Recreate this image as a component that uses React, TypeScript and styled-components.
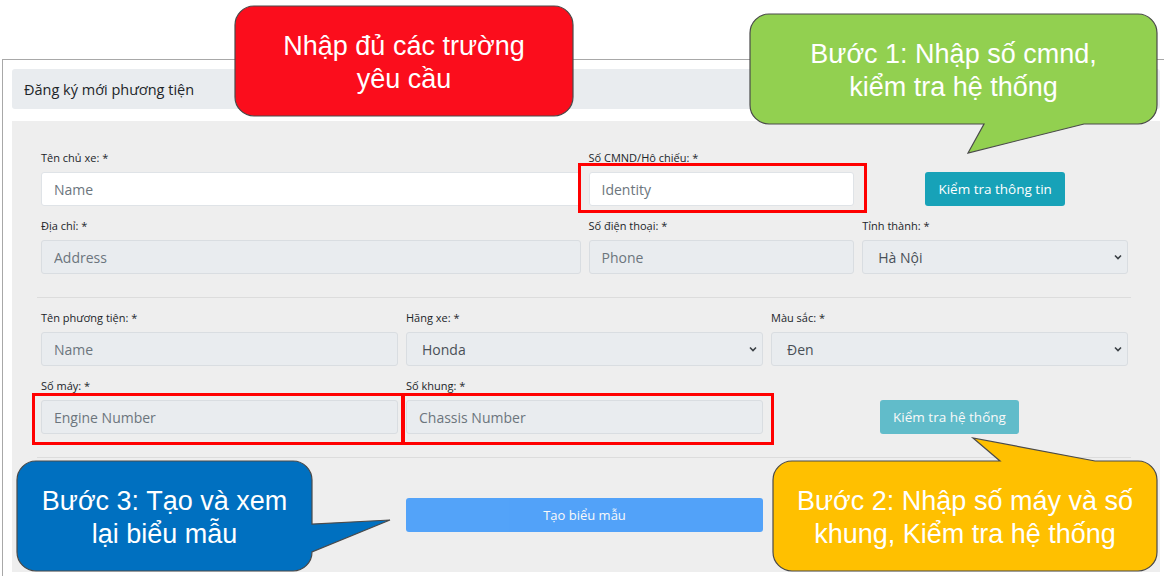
import React from "react";
import styled, { createGlobalStyle } from "styled-components";

const GlobalStyle = createGlobalStyle`
  html, body { margin: 0; padding: 0; background: #ffffff; overflow: hidden; }
  body { font-family: "Open Sans", "Noto Sans", sans-serif; }
  * { box-sizing: border-box; }
`;

const Page = styled.div`
  position: relative;
  width: 1164px;
  height: 576px;
  overflow: hidden;
  padding: 59px 0 0 2px;
`;

const Frame = styled.div`
  width: 1180px;
  height: 620px;
  border-top: 1px solid #a8a8a8;
  border-left: 1px solid #a8a8a8;
  padding: 9px 0 0 9px;
`;

const Header = styled.div`
  width: 1148px;
  height: 40px;
  background: #e9ecef;
  border-radius: 3px;
  display: flex;
  align-items: center;
  padding-left: 12px;
  font-size: 14.5px;
  color: #212529;
`;

const Body = styled.div`
  margin-top: 12px;
  width: 1148px;
  background: #eeeeee;
  padding: 30px 32px 40px 29px;
`;

const Grid = styled.div`
  display: grid;
  grid-template-columns: repeat(12, minmax(0, 1fr));
  column-gap: 8px;
  row-gap: 13px;
`;

const Field = styled.div<{ $span: number }>`
  grid-column: span ${(p) => p.$span};
  display: flex;
  flex-direction: column;
  gap: 7px;
`;

const Cell = styled.div<{ $span: number }>`
  grid-column: span ${(p) => p.$span};
  display: flex;
  align-items: flex-end;
  justify-content: center;
`;

const Label = styled.label`
  font-size: 11px;
  line-height: 14px;
  color: #212529;
  white-space: nowrap;
`;

const Input = styled.input<{ $white?: boolean }>`
  height: 34px;
  width: 100%;
  border: 1px solid ${(p) => (p.$white ? "#dfe3e7" : "#d9dde1")};
  border-radius: 3px;
  background: ${(p) => (p.$white ? "#ffffff" : "#e9ecef")};
  padding: 0 12px;
  font-family: "Open Sans", "Noto Sans", sans-serif;
  font-size: 14px;
  color: #495057;
  outline: none;
  &::placeholder {
    color: #6c757d;
    opacity: 1;
  }
`;

const SelectBox = styled.div`
  height: 34px;
  width: 100%;
  border: 1px solid #d9dde1;
  border-radius: 3px;
  background: #e9ecef;
  padding: 0 5px 0 15px;
  display: flex;
  align-items: center;
  justify-content: space-between;
  font-size: 14px;
  color: #495057;
`;

const Chevron = () => (
  <svg width="8" height="6" viewBox="0 0 8 6">
    <path d="M1 1.5 L4 4.5 L7 1.5" fill="none" stroke="#3a3f44" strokeWidth="1.6" />
  </svg>
);

const Button = styled.button<{ $muted?: boolean; $full?: boolean; $primary?: boolean }>`
  height: 34px;
  padding: 0 13px;
  width: ${(p) => (p.$full ? "100%" : "auto")};
  border: none;
  border-radius: 3px;
  background: ${(p) => (p.$primary ? "#007bff" : "#17a2b8")};
  opacity: ${(p) => (p.$muted ? 0.65 : 1)};
  color: #ffffff;
  font-family: "Open Sans", "Noto Sans", sans-serif;
  font-size: ${(p) => (p.$primary ? "13px" : "13.5px")};
  white-space: nowrap;
`;

const Divider = styled.hr<{ $after: number }>`
  border: 0;
  border-top: 1px solid #dcdcdc;
  margin: 23px -3px ${(p) => p.$after}px -4px;
  height: 0;
`;

const Highlight = styled.div<{ $x: number; $y: number; $w: number; $h: number }>`
  position: absolute;
  left: ${(p) => p.$x}px;
  top: ${(p) => p.$y}px;
  width: ${(p) => p.$w}px;
  height: ${(p) => p.$h}px;
  border: 3px solid #ff0000;
`;

const Bubble = styled.div<{ $x: number; $y: number; $w: number; $h: number }>`
  position: absolute;
  left: ${(p) => p.$x}px;
  top: ${(p) => p.$y}px;
  width: ${(p) => p.$w}px;
  height: ${(p) => p.$h}px;
  display: flex;
  align-items: center;
  justify-content: center;
  padding-top: 3px;
`;

const BubbleShape = styled.svg`
  position: absolute;
  left: 0;
  top: 0;
  overflow: visible;
`;

const BubbleText = styled.div`
  position: relative;
  font-family: "Liberation Sans", Arial, sans-serif;
  font-size: 27px;
  line-height: 33px;
  color: #ffffff;
  text-align: center;
  white-space: nowrap;
`;

type Tail = { edge: "top" | "right" | "bottom"; a: number; b: number; tip: [number, number] };

function bubblePath(w: number, h: number, r: number, tail?: Tail) {
  let d = `M ${r} 0`;
  if (tail?.edge === "top") d += ` H ${tail.a} L ${tail.tip[0]} ${tail.tip[1]} L ${tail.b} 0`;
  d += ` H ${w - r} A ${r} ${r} 0 0 1 ${w} ${r}`;
  if (tail?.edge === "right") d += ` V ${tail.a} L ${tail.tip[0]} ${tail.tip[1]} L ${w} ${tail.b}`;
  d += ` V ${h - r} A ${r} ${r} 0 0 1 ${w - r} ${h}`;
  if (tail?.edge === "bottom") d += ` H ${tail.b} L ${tail.tip[0]} ${tail.tip[1]} L ${tail.a} ${h}`;
  d += ` H ${r} A ${r} ${r} 0 0 1 0 ${h - r} V ${r} A ${r} ${r} 0 0 1 ${r} 0 Z`;
  return d;
}

type CalloutProps = {
  x: number;
  y: number;
  w: number;
  h: number;
  fill: string;
  tail?: Tail;
  lines: string[];
};

const Callout = ({ x, y, w, h, fill, tail, lines }: CalloutProps) => (
  <Bubble $x={x} $y={y} $w={w} $h={h}>
    <BubbleShape width={w} height={h}>
      <path d={bubblePath(w, h, 19, tail)} fill={fill} stroke="#4a4a4a" strokeWidth="1.2" />
    </BubbleShape>
    <BubbleText>
      {lines.map((l, i) => (
        <div key={i}>{l}</div>
      ))}
    </BubbleText>
  </Bubble>
);

const Select = ({ value }: { value: string }) => (
  <SelectBox>
    <span>{value}</span>
    <Chevron />
  </SelectBox>
);

export default function App() {
  return (
    <>
      <GlobalStyle />
      <Page>
        <Frame>
          <Header>Đăng ký mới phương tiện</Header>
          <Body>
            <Grid>
              <Field $span={6}>
                <Label>Tên chủ xe: *</Label>
                <Input $white placeholder="Name" readOnly />
              </Field>
              <Field $span={3}>
                <Label>Số CMND/Hộ chiếu: *</Label>
                <Input $white placeholder="Identity" readOnly />
              </Field>
              <Cell $span={3}>
                <Button>Kiểm tra thông tin</Button>
              </Cell>
              <Field $span={6}>
                <Label>Địa chỉ: *</Label>
                <Input placeholder="Address" disabled />
              </Field>
              <Field $span={3}>
                <Label>Số điện thoại: *</Label>
                <Input placeholder="Phone" disabled />
              </Field>
              <Field $span={3}>
                <Label>Tỉnh thành: *</Label>
                <Select value="Hà Nội" />
              </Field>
            </Grid>
            <Divider $after={13} />
            <Grid>
              <Field $span={4}>
                <Label>Tên phương tiện: *</Label>
                <Input placeholder="Name" disabled />
              </Field>
              <Field $span={4}>
                <Label>Hãng xe: *</Label>
                <Select value="Honda" />
              </Field>
              <Field $span={4}>
                <Label>Màu sắc: *</Label>
                <Select value="Đen" />
              </Field>
              <Field $span={4}>
                <Label>Số máy: *</Label>
                <Input placeholder="Engine Number" disabled />
              </Field>
              <Field $span={4}>
                <Label>Số khung: *</Label>
                <Input placeholder="Chassis Number" disabled />
              </Field>
              <Cell $span={4}>
                <Button $muted>Kiểm tra hệ thống</Button>
              </Cell>
            </Grid>
            <Divider $after={40} />
            <Grid>
              <Cell $span={4} />
              <Cell $span={4}>
                <Button $primary $muted $full>
                  Tạo biểu mẫu
                </Button>
              </Cell>
            </Grid>
          </Body>
        </Frame>

        <Highlight $x={578} $y={163} $w={289} $h={50} />
        <Highlight $x={32} $y={393} $w={372} $h={52} />
        <Highlight $x={402} $y={393} $w={372} $h={52} />

        <Callout x={235} y={6} w={338} h={110} fill="#fb0d1c" lines={["Nhập đủ các trường", "yêu cầu"]} />
        <Callout
          x={750}
          y={14}
          w={407}
          h={110}
          fill="#92d050"
          tail={{ edge: "bottom", a: 234, b: 334, tip: [218, 139] }}
          lines={["Bước 1: Nhập số cmnd,", "kiểm tra hệ thống"]}
        />
        <Callout
          x={773}
          y={461}
          w={384}
          h={110}
          fill="#ffc000"
          tail={{ edge: "top", a: 227, b: 322, tip: [200, -23] }}
          lines={["Bước 2: Nhập số máy và số", "khung, Kiểm tra hệ thống"]}
        />
        <Callout
          x={17}
          y={461}
          w={295}
          h={110}
          fill="#0070c0"
          tail={{ edge: "right", a: 63, b: 91, tip: [373, 59] }}
          lines={["Bước 3: Tạo và xem", "lại biểu mẫu"]}
        />
      </Page>
    </>
  );
}
